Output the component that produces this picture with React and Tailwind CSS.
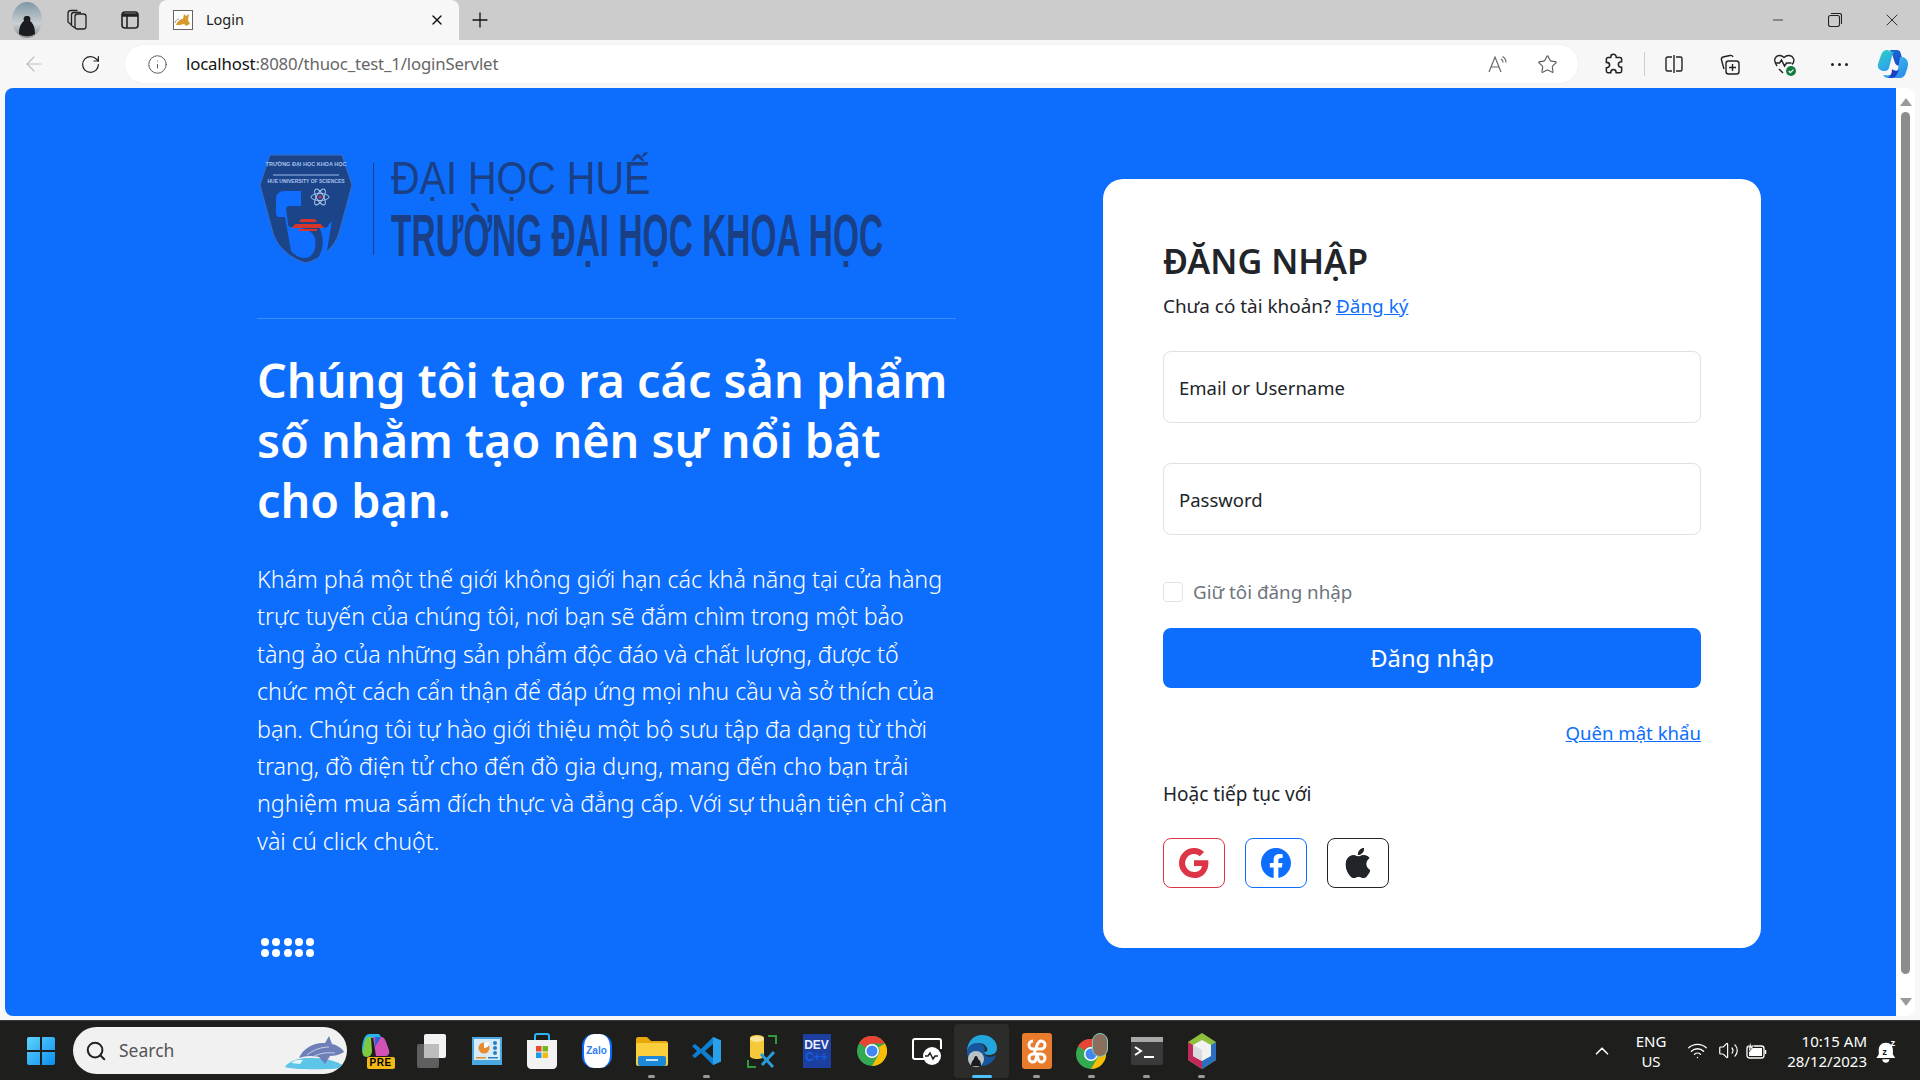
import { ArrowLeft, RotateCw, Info, Star, Plus, X, Minus, Search, ChevronUp, Wifi, Volume2 } from 'lucide-react';
import { BsGoogle, BsFacebook, BsApple } from 'react-icons/bs';

const sans = "font-['Noto_Sans','Open_Sans',sans-serif]";

const introLines = [
  'Khám phá một thế giới không giới hạn các khả năng tại cửa hàng',
  'trực tuyến của chúng tôi, nơi bạn sẽ đắm chìm trong một bảo',
  'tàng ảo của những sản phẩm độc đáo và chất lượng, được tổ',
  'chức một cách cẩn thận để đáp ứng mọi nhu cầu và sở thích của',
  'bạn. Chúng tôi tự hào giới thiệu một bộ sưu tập đa dạng từ thời',
  'trang, đồ điện tử cho đến đồ gia dụng, mang đến cho bạn trải',
  'nghiệm mua sắm đích thực và đẳng cấp. Với sự thuận tiện chỉ cần',
  'vài cú click chuột.',
];

function Avatar() {
  return (
    <svg width="30" height="36" viewBox="0 0 30 36">
      <defs>
        <linearGradient id="sky" x1="0" y1="0" x2="0" y2="1">
          <stop offset="0" stopColor="#7f98a6" />
          <stop offset="0.6" stopColor="#c9cfd2" />
          <stop offset="1" stopColor="#8b8f92" />
        </linearGradient>
      </defs>
      <ellipse cx="15" cy="18" rx="15" ry="18" fill="url(#sky)" />
      <path d="M7 32c0-7 2-11 5-13-1-3 0-5 3-5s4 2 3 5c3 2 5 6 5 13-5 3-11 3-16 0z" fill="#1c1c20" />
    </svg>
  );
}

function Collections() {
  return (
    <svg width="22" height="22" viewBox="0 0 22 22" fill="none" stroke="#222" strokeWidth="1.3">
      <rect x="9" y="5" width="11" height="15" rx="2.5" />
      <path d="M9 19 5.500 16.500V6c0-1.500 1-2.500 2.500-2.500h7" />
      <path d="M5.500 16 2 13V4c0-1.500 1-2.500 2.500-2.500h7" />
    </svg>
  );
}

function VerticalTabs() {
  return (
    <svg width="20" height="20" viewBox="0 0 20 20" fill="none" stroke="#222" strokeWidth="1.6">
      <rect x="2" y="2" width="16" height="16" rx="3" />
      <path d="M2 5h16" strokeWidth="3.500" />
      <path d="M7 5v13" />
    </svg>
  );
}

function Tomcat() {
  return (
    <svg width="20" height="20" viewBox="0 0 20 20">
      <rect x="0.5" y="0.500" width="19" height="19" fill="#fff" stroke="#666" />
      <path d="M3 15c2-5 5-6 7-6l1-5 2 2 3-2-1 6 2 4-4 2-2-2-4 1z" fill="#d69a2e" />
      <path d="M2 13c1-3 2-4 4-4" stroke="#999" fill="none" />
    </svg>
  );
}

function ReadAloud() {
  return (
    <svg width="22" height="22" viewBox="0 0 22 22" fill="none" stroke="#666" strokeWidth="1.2">
      <path d="M2 19 8 4l6 15M4.500 14h7" />
      <path d="M14 6c1.500.8 2 2 2 3.500M15.500 3.500C18 5 19 7 19 9.500" />
    </svg>
  );
}

function Extensions() {
  return (
    <svg width="24" height="24" viewBox="0 0 22 22" fill="none" stroke="#222" strokeWidth="1.400">
      <path d="M8 4.500a2.500 2.500 0 0 1 5 0V5h3.500A1.500 1.500 0 0 1 18 6.500V9h-.5a2.500 2.500 0 0 0 0 5h.5v3.500a1.500 1.500 0 0 1-1.500 1.500H13c0-2-1-3-2.500-3S8 17 8 19H5.500A1.500 1.500 0 0 1 4 17.500V14.500c2 0 3-1 3-2.500S6 9.500 4 9.500V6.500A1.500 1.500 0 0 1 5.500 5H8z" />
    </svg>
  );
}

function SplitScreen() {
  return (
    <svg width="22" height="22" viewBox="0 0 22 22" fill="none" stroke="#222" strokeWidth="1.400">
      <path d="M9 4H4.500A1.500 1.500 0 0 0 3 5.500v11A1.500 1.500 0 0 0 4.500 18H9M13 4h4.500A1.500 1.500 0 0 1 19 5.500v11a1.500 1.500 0 0 1-1.500 1.500H13" />
      <path d="M11 2v18" />
    </svg>
  );
}

function AddCollection() {
  return (
    <svg width="24" height="24" viewBox="0 0 24 24" fill="none" stroke="#222" strokeWidth="1.400">
      <path d="M6 17 3.500 8c-.4-1.500.3-2.500 1.500-3l7-1.500c1.500-.3 2.500.3 3 1.500" />
      <rect x="8" y="9" width="13" height="13" rx="2.500" />
      <path d="M14.500 12v7M11 15.500h7" />
    </svg>
  );
}

function Health() {
  return (
    <svg width="26" height="26" viewBox="0 0 26 26" fill="none">
      <path d="M5 15C3 12 2 10 3 7.500 4.500 4 9 3.500 12 6.500 15 3.500 20 4 21.500 7.500c.8 2.200 0 4.500-1.500 6" stroke="#222" strokeWidth="1.400" />
      <path d="M3 12h4.500l2-3 3 6 2-3h5" stroke="#222" strokeWidth="1.400" />
      <path d="M7 18l4 4" stroke="#222" strokeWidth="1.400" />
      <circle cx="19" cy="20" r="5" fill="#107c41" />
      <path d="m16.800 20 1.600 1.600 3-3" stroke="#fff" strokeWidth="1.300" />
    </svg>
  );
}

function Copilot() {
  return (
    <svg width="32" height="32" viewBox="0 0 32 32">
      <defs>
        <linearGradient id="cpA" x1="0" y1="0" x2="0.6" y2="1">
          <stop offset="0" stopColor="#2bd4c0" />
          <stop offset="1" stopColor="#2f9cf0" />
        </linearGradient>
        <linearGradient id="cpB" x1="0.2" y1="0" x2="1" y2="1">
          <stop offset="0" stopColor="#1a6fd6" />
          <stop offset="1" stopColor="#1d3fc0" />
        </linearGradient>
        <linearGradient id="cpC" x1="0" y1="0" x2="1" y2="1">
          <stop offset="0" stopColor="#39c6f2" />
          <stop offset="1" stopColor="#2a86e8" />
        </linearGradient>
      </defs>
      <path d="M12 2h8c2 0 3 1 3.500 2.500L27 17c-3 2-8 1-9-2l-3-9C14 3.500 13 2 12 2z" fill="url(#cpB)" />
      <path d="M10 2c-3 0-5 2-6 5L1 16c-1 4 2 7 6 7h1c2 0 3-1 4-3l3-12c.5-3 1-4 3-4h-3C13 4 12 2 10 2z" fill="url(#cpA)" />
      <path d="M23 9h2c3 0 6 3 6 7 0 3-1 5-2 8-1 4-3 6-7 6H11c-2 0-4-1-5-3 7 1 13-1 15-6z" fill="url(#cpC)" />
      <path d="M15 21c2 2 5 2 7 1l-3 6c-2 2-5 2-8 2 3-2 4-5 4-9z" fill="#1d3fc0" />
    </svg>
  );
}

function Shield() {
  return (
    <svg className="shrink-0" width="94" height="112" viewBox="0 0 94 112">
      <path d="M11 2h72l10 30-13 48c-4 14-18 26-33 30-15-4-29-16-33-30L1 32z" fill="#1b4489" stroke="#3c6ec0" strokeWidth="1" />
      <path d="M14 22h66" stroke="#9db9e6" strokeWidth="1" />
      <text x="47" y="13" textAnchor="middle" fontSize="5.500" fill="#a9c3ec" fontFamily="Liberation Sans" fontWeight="700">TRƯỜNG ĐẠI HỌC KHOA HỌC</text>
      <text x="47" y="30" textAnchor="middle" fontSize="5" fill="#a9c3ec" fontFamily="Liberation Sans" fontWeight="700">HUE UNIVERSITY OF SCIENCES</text>
      <path d="M42 38H26c-6 0-9 3-9 8v14c0 2 1 4 3 4h6l6 34c6 6 10 7 14 7 8 0 12-10 10-20-2-6-8-9-14-10l-10-1c-3 0-3-3-3-4l-2-14c0-1 1-3 3-3h12z" fill="#0f6dff" />
      <path d="M60 74c8 1 8 2 10-3l3-3-5 30c-2 4-6 7-10 8 5-6 7-14 5-24-1-4-2-6-3-8z" fill="#0f6dff" />
      <g fill="none" stroke="#a9c3ec" strokeWidth="1">
        <ellipse cx="61" cy="44" rx="9" ry="3.500" />
        <ellipse cx="61" cy="44" rx="9" ry="3.500" transform="rotate(60 61 44)" />
        <ellipse cx="61" cy="44" rx="9" ry="3.500" transform="rotate(120 61 44)" />
      </g>
      <circle cx="61" cy="44" r="1.500" fill="#d33" />
      <path d="M42 66h14l2 3H40zM36 71h26l3 4H33zM40 76h18v2H40z" fill="#d8352a" />
    </svg>
  );
}

function Windows() {
  return (
    <svg width="30" height="30" viewBox="0 0 30 30">
      <defs>
        <linearGradient id="win" x1="0" y1="0" x2="1" y2="1">
          <stop offset="0" stopColor="#5fd4fb" />
          <stop offset="1" stopColor="#0a8ef0" />
        </linearGradient>
      </defs>
      <path d="M1 3a2 2 0 0 1 2-2h11v13H1zM16 1h11a2 2 0 0 1 2 2v11H16zM1 16h13v13H3a2 2 0 0 1-2-2zM16 16h13v11a2 2 0 0 1-2 2H16z" fill="url(#win)" />
    </svg>
  );
}

function Whale() {
  return (
    <svg width="64" height="40" viewBox="0 0 64 40">
      <path d="M2 36c5-7 14-9 24-9 12 0 26 1 36 9-4 3-55 3-60 0z" fill="#5cc5e8" />
      <path d="M8 32c3-3 8-4 12-3l-3 4z" fill="#e8f6fb" />
      <path d="M16 27c4-10 16-16 26-15l4-7 3 8c5 1 10 4 12 8-5 3-10 4-14 4l-5 8-6-7c-8-2-14-1-20 1z" fill="#6e7fb8" />
      <path d="M24 24c6-5 14-8 22-8M28 27c6-4 14-6 24-5" stroke="#c6cfe8" strokeWidth="1" fill="none" />
    </svg>
  );
}

function SearchBox() {
  return (
    <div className="flex items-center w-[274px] h-[47px] rounded-full bg-[#f1f1f1] pl-[12px] overflow-hidden">
      <Search size={22} strokeWidth={2.2} color="#222" />
      <span className={`ml-[12px] flex-1 text-[17.500px] text-[#555] ${sans}`}>Search</span>
      <Whale />
    </div>
  );
}

function CopilotPre() {
  return (
    <div className="relative w-[32px] h-[36px]">
      <svg width="30" height="28" viewBox="0 0 30 28">
        <path d="M8 1h10l3 4H10C6 5 5 10 4 18c-1 4-3 3-3-1 0-6 2-16 7-16z" fill="#27b6e8" />
        <path d="M4 8c1-4 3-4 6-4l1 14c0 3-2 6-5 6-4 0-5-3-4-7z" fill="#7ecb3f" />
        <path d="M12 4h8c3 0 4 2 5 5l3 8c1 4-1 6-4 6h-9z" fill="#d352b8" />
        <path d="M14 4h6l-6 10z" fill="#2a64d8" />
      </svg>
      <span className="absolute left-[6px] bottom-0 px-[3px] rounded-[2px] bg-[#f5b916] text-[10px] leading-[12px] font-bold text-black font-['Liberation_Sans',sans-serif] tracking-[0.5px]">PRE</span>
    </div>
  );
}

function TaskView() {
  return (
    <svg width="30" height="34" viewBox="0 0 30 34">
      <rect x="0" y="10" width="22" height="24" rx="2" fill="#5f5f5f" />
      <rect x="7" y="0" width="22" height="24" rx="2" fill="#f2f2f2" />
      <rect x="7" y="10" width="15" height="14" fill="#bdbdbd" />
    </svg>
  );
}

function Widgets() {
  return (
    <svg width="30" height="28" viewBox="0 0 30 28">
      <rect width="30" height="28" fill="#4aa7e0" />
      <rect x="2" y="2" width="26" height="21" fill="#d8ecf8" />
      <circle cx="12" cy="11" r="5.500" fill="#e88c30" />
      <path d="M12 11V5.500h5.500A5.500 5.500 0 0 1 12 11z" fill="#fff" />
      <circle cx="23" cy="6" r="2" fill="#2a7fc0" />
      <circle cx="23" cy="11" r="2" fill="#2a7fc0" />
      <circle cx="23" cy="16" r="2" fill="#2a7fc0" />
      <rect x="4" y="20" width="10" height="1.500" fill="#e88c30" />
      <rect x="16" y="20" width="10" height="1.500" fill="#2a7fc0" />
    </svg>
  );
}

function Store() {
  return (
    <svg width="30" height="36" viewBox="0 0 30 36">
      <path d="M8 8V3c0-1 1-2 2-2h10c1 0 2 1 2 2v5" stroke="#29b6f6" strokeWidth="2" fill="none" />
      <path d="M0 7h30v25c0 2-2 4-4 4H4c-2 0-4-2-4-4z" fill="#f2f2f2" />
      <rect x="9" y="13" width="5.500" height="5.500" fill="#e8492b" />
      <rect x="15.500" y="13" width="5.500" height="5.500" fill="#7ab51d" />
      <rect x="9" y="19.500" width="5.500" height="5.500" fill="#1d9be8" />
      <rect x="15.500" y="19.500" width="5.500" height="5.500" fill="#f5b916" />
    </svg>
  );
}

function Zalo() {
  return (
    <div className="flex items-center justify-center w-[30px] h-[34px] rounded-[12px] bg-white border-x-2 border-[#0a68ff] text-[#2f80f5] text-[10px] font-bold font-['Liberation_Sans',sans-serif]">Zalo</div>
  );
}

function Folder() {
  return (
    <svg width="32" height="30" viewBox="0 0 32 30">
      <path d="M0 3c0-1 1-2 2-2h9l4 4h15c1 0 2 1 2 2v4H0z" fill="#e8a80c" />
      <path d="M0 7h32v21c0 1-1 2-2 2H2c-1 0-2-1-2-2z" fill="#fbcf3c" />
      <rect x="2" y="20" width="28" height="10" rx="2" fill="#1d87d8" />
      <rect x="10" y="23" width="12" height="2" fill="#bfe3fb" />
    </svg>
  );
}

function VsCode() {
  return (
    <svg width="30" height="30" viewBox="0 0 30 30">
      <path d="M21 1 29 4.500v21L21 29 9 17l-6 5-3-2 5-5-5-5 3-2 6 5z" fill="#0e7fd0" />
      <path d="M21 1 29 4.500v21L21 29z" fill="#2ba0ea" />
      <path d="M21 8 13 15l8 7z" fill="#1e1f1c" />
    </svg>
  );
}

function DbTools() {
  return (
    <svg width="30" height="34" viewBox="0 0 30 34">
      <path d="M3 4c0-4 14-4 14 0v18c0 4-14 4-14 0z" fill="#f5c93a" />
      <ellipse cx="10" cy="5" rx="7" ry="3" fill="#f9e49a" />
      <path d="M21 2h8v8M1 26v7h8" stroke="#2e9a3c" strokeWidth="2" fill="none" />
      <path d="M14 20l12 13M27 18 15 31" stroke="#2a9ad8" strokeWidth="3" />
    </svg>
  );
}

function DevCpp() {
  return (
    <div className="flex flex-col items-center justify-center w-[28px] h-[34px] bg-[#1d3fa0] font-['Liberation_Sans',sans-serif] font-bold leading-none">
      <span className="text-[12px] text-[#e8eefc]">DEV</span>
      <span className="text-[12px] text-[#0f5fe0]">C++</span>
    </div>
  );
}

function Chrome() {
  return (
    <svg width="30" height="30" viewBox="0 0 30 30">
      <circle cx="15" cy="15" r="15" fill="#34a853" />
      <path d="M15 0a15 15 0 0 1 13 7.500H15a7.500 7.500 0 0 0-6.500 3.750L2 7A15 15 0 0 1 15 0z" fill="#ea4335" />
      <path d="M28 7.500A15 15 0 0 1 15 30l6.500-11.250A7.500 7.500 0 0 0 21.500 11.250z" fill="#fbbc04" />
      <circle cx="15" cy="15" r="7" fill="#fff" />
      <circle cx="15" cy="15" r="5.500" fill="#4285f4" />
    </svg>
  );
}

function Perfmon() {
  return (
    <svg width="30" height="30" viewBox="0 0 30 30" fill="none">
      <path d="M12 23H3a2 2 0 0 1-2-2V5a2 2 0 0 1 2-2h24a2 2 0 0 1 2 2v8" stroke="#fff" strokeWidth="2" />
      <circle cx="20" cy="20" r="9" fill="#fff" />
      <path d="M13 20h3l2-3 3 6 2-3h3" stroke="#222" strokeWidth="1.500" />
    </svg>
  );
}

function Edge() {
  return (
    <svg width="30" height="34" viewBox="0 0 30 34">
      <path d="M15 1c9 0 15 6 15 13 0 5-4 7-8 7-3 0-5-1-5-3 3 0 4-2 3-4-2-5-8-6-13-3C2 13 0 16 0 18 0 8 6 1 15 1z" fill="#22a5dc" />
      <path d="M0 17c1-5 5-8 10-8s8 3 8 7c-2 2-1 6 4 7 3 0 5-1 7-2-2 7-8 11-14 11C6 32 0 26 0 17z" fill="#17569e" />
      <circle cx="9" cy="25" r="8" fill="#b9c2c6" />
      <path d="M4 32c0-4 2-6 3-7 0-2 1-3 2-3s2 1 2 3c2 1 3 3 3 7z" fill="#1b1b1f" />
    </svg>
  );
}

function Xampp() {
  return (
    <div className="flex items-center justify-center w-[30px] h-[36px] rounded-[3px] bg-[#e97b2c]">
      <svg width="22" height="26" viewBox="0 0 22 26" fill="none" stroke="#fff" strokeWidth="3">
        <path d="M7 3a4 4 0 0 0 0 8h8a4 4 0 0 0 0-8c-2 0-3 2-4 4-1 4-2 8-4 9a4 4 0 0 0 0 8c3 0 3-3 4-8 1 4 1 8 4 8a4 4 0 0 0 0-8H7" />
      </svg>
    </div>
  );
}

function ChromeProfile() {
  return (
    <div className="relative w-[32px] h-[36px] pt-[6px]">
      <Chrome />
      <span className="absolute right-0 top-0 w-[16px] h-[24px] rounded-full bg-[#8a6f5d] border border-[#7fc8c0]" />
    </div>
  );
}

function Terminal() {
  return (
    <svg width="32" height="28" viewBox="0 0 32 28">
      <rect width="32" height="28" rx="2" fill="#3a3a3a" />
      <rect width="32" height="5" fill="#a8a8a8" />
      <path d="M4 10l6 4-6 4" stroke="#fff" strokeWidth="2" fill="none" />
      <path d="M13 20h10" stroke="#fff" strokeWidth="2" />
    </svg>
  );
}

function Box3d() {
  return (
    <svg width="28" height="36" viewBox="0 0 28 36">
      <path d="M14 0 28 9v18l-14 9L0 27V9z" fill="#8fbf3c" />
      <path d="M0 9l14 9v18L0 27z" fill="#c0285a" />
      <path d="M28 9 14 18v18l14-9z" fill="#2a6fc0" />
      <path d="M14 7l9 5v11l-9 5-9-5V12z" fill="#f2f2f2" />
      <path d="M14 17v11l-9-5V12z" fill="#d8dadc" />
    </svg>
  );
}

function BatteryCharge() {
  return (
    <svg width="22" height="18" viewBox="0 0 22 18" fill="none">
      <rect x="1" y="4" width="17" height="12" rx="2.500" stroke="#fff" strokeWidth="1.300" />
      <rect x="3" y="6" width="13" height="8" fill="#fff" />
      <path d="M19.500 8v4" stroke="#fff" strokeWidth="1.500" />
      <path d="M5 0 2 6h3L3 10l5-6H5z" fill="#fff" stroke="#1e1f1c" strokeWidth="0.500" />
    </svg>
  );
}

function BellZz() {
  return (
    <svg width="24" height="26" viewBox="0 0 20 22" fill="#fff">
      <path d="M9 4C5 4 3 7 3 10v4l-2 3h16l-2-3v-4c0-3-2-6-6-6zM6 18h6c0 2-1.500 3-3 3s-3-1-3-3z" />
      <text x="6" y="14" fontSize="8" fontWeight="700" fill="#1e1f1c" fontFamily="Liberation Sans">z</text>
      <text x="13" y="7" fontSize="8" fontWeight="700" fontFamily="Liberation Sans">z</text>
    </svg>
  );
}

function Slot({ w, children }) {
  return <div className={`flex items-center justify-center shrink-0 h-full ${w}`}>{children}</div>;
}

function Dock({ running, active, children }) {
  return (
    <div className={`relative flex items-center justify-center w-[55px] h-[54px] rounded-[4px] ${active ? 'bg-[#2c2d2a]' : ''}`}>
      {children}
      {running && <span className={`absolute bottom-0 h-[3px] rounded-full ${active ? 'w-[20px] bg-[#4cc2ff]' : 'w-[7px] bg-[#9a9a9a]'}`} />}
    </div>
  );
}

function Dots() {
  return (
    <div className="grid grid-cols-5 gap-x-[3.250px] gap-y-[3px] w-[53px]">
      {Array.from({ length: 10 }).map((_, i) => (
        <span key={i} className="w-[8px] h-[8px] rounded-full bg-white" />
      ))}
    </div>
  );
}

function Field({ placeholder, className }) {
  return (
    <div className={`flex items-center h-[72px] pl-[15px] pt-[1px] border border-[#dee2e6] rounded-[8px] text-[18.500px] text-[#212529] ${className}`}>
      {placeholder}
    </div>
  );
}

export default function App() {
  return (
    <div className={`flex flex-col h-screen overflow-hidden bg-[#f7f7f7] ${sans}`}>
      {/* tabs */}
      <div className="flex h-[40px] shrink-0 bg-[#cccccc]">
        <Slot w="w-[54px]"><Avatar /></Slot>
        <Slot w="w-[46px]"><Collections /></Slot>
        <Slot w="w-[59px]"><VerticalTabs /></Slot>
        <div className="flex items-center w-[300px] pl-[14px] pr-[14px] rounded-t-[8px] bg-[#f7f7f7]">
          <Tomcat />
          <span className="ml-[13px] flex-1 text-[14.500px] text-[#222]">Login</span>
          <X size={16} color="#111" />
        </div>
        <Slot w="w-[42px]"><Plus size={24} strokeWidth={1.300} color="#111" /></Slot>
        <div className="flex-1" />
        <Slot w="w-[57px]"><Minus size={16} strokeWidth={1.200} color="#222" /></Slot>
        <Slot w="w-[57px]">
          <svg width="14" height="14" viewBox="0 0 14 14" fill="none" stroke="#222" strokeWidth="1.100">
            <rect x="0.500" y="2.500" width="11" height="11" rx="2" />
            <path d="M3 .5h8.500a2 2 0 0 1 2 2V11" />
          </svg>
        </Slot>
        <Slot w="w-[57px]"><X size={20} strokeWidth={1.100} color="#222" /></Slot>
      </div>

      {/* toolbar */}
      <div className="flex items-center h-[48px] shrink-0">
        <Slot w="w-[62px] pl-[6px]"><ArrowLeft size={24} strokeWidth={1.100} color="#bdbdbd" /></Slot>
        <Slot w="w-[56px]"><RotateCw size={21} strokeWidth={1.400} color="#222" /></Slot>
        <div className="flex items-center ml-[7px] w-[1459px] h-[38px] rounded-full bg-white shadow-[0_0_3px_rgba(0,0,0,0.06)]">
          <Slot w="w-[61px] pl-[4px]"><Info size={21} strokeWidth={1.100} color="#555" /></Slot>
          <span className="flex-1 text-[16.750px] tracking-[-0.15px] text-[#111]">localhost<span className="text-[#666]">:8080/thuoc_test_1/loginServlet</span></span>
          <Slot w="w-[50px] pl-[3px]"><ReadAloud /></Slot>
          <Slot w="w-[52px] mr-[5px]"><Star size={21} strokeWidth={1.200} color="#555" /></Slot>
        </div>
        <Slot w="w-[60px] ml-[6px]"><Extensions /></Slot>
        <div className="w-px h-[24px] bg-[#d0d0d0]" />
        <Slot w="w-[57px]"><SplitScreen /></Slot>
        <Slot w="w-[56px]"><AddCollection /></Slot>
        <Slot w="w-[54px]"><Health /></Slot>
        <Slot w="w-[54px]">
          <span className="flex gap-[4px]">
            <span className="w-[3px] h-[3px] rounded-full bg-[#222]" />
            <span className="w-[3px] h-[3px] rounded-full bg-[#222]" />
            <span className="w-[3px] h-[3px] rounded-full bg-[#222]" />
          </span>
        </Slot>
        <Slot w="w-[54px]"><Copilot /></Slot>
      </div>

      {/* page */}
      <div className="flex h-[928px] shrink-0 pl-[5px]">
        <div className="flex w-[1891px] h-full rounded-tl-[8px] rounded-bl-[8px] bg-[#0d6efd] overflow-hidden">
          <div className="w-[699px] ml-[252px] pt-[62px] shrink-0">
            <div className="flex items-center h-[118px] pl-[2px] text-[#1a3f85] font-['Liberation_Sans_Narrow','Liberation_Sans',sans-serif]">
              <Shield />
              <div className="w-px h-[92px] ml-[20px] bg-[#1a3f85] shrink-0" />
              <div className="ml-[17px] pt-[2px] flex flex-col w-[495px] shrink-0">
                <span className="text-[46px] leading-[52px] origin-left scale-x-[0.86] whitespace-nowrap">ĐẠI HỌC HUẾ</span>
                <span className="text-[60px] leading-[64px] font-bold origin-left scale-x-[0.558] whitespace-nowrap">TRƯỜNG ĐẠI HỌC KHOA HỌC</span>
              </div>
            </div>
            <div className="h-px mt-[50px] bg-[#3d8bfd]" />
            <h1 className="mt-[31px] text-[46.750px] leading-[60px] font-semibold text-white">
              Chúng tôi tạo ra các sản phẩm<br />số nhằm tạo nên sự nổi bật<br />cho bạn.
            </h1>
            <p className="mt-[31px] text-[23.250px] leading-[37.400px] font-light text-white">
              {introLines.map(line => (
                <span key={line} className="block whitespace-nowrap">{line}</span>
              ))}
            </p>
            <div className="mt-[78px] pl-[4px]"><Dots /></div>
          </div>

          <div className="w-[658px] h-[769px] ml-[147px] mt-[91px] shrink-0 rounded-[20px] bg-white px-[60px] pt-[58px] text-[#212529]">
            <h2 className="text-[34.200px] leading-[48px] font-semibold">ĐĂNG NHẬP</h2>
            <p className="mt-[6px] text-[18.900px] leading-[30px]">
              Chưa có tài khoản? <a className="text-[#0d6efd] underline">Đăng ký</a>
            </p>
            <Field placeholder="Email or Username" className="mt-[30px]" />
            <Field placeholder="Password" className="mt-[40px]" />
            <label className="flex items-center gap-[10px] mt-[42px] text-[18.800px] leading-[30px] text-[#6c757d]">
              <span className="w-[20px] h-[20px] rounded-[4px] border border-[#dee2e6] bg-white" />
              Giữ tôi đăng nhập
            </label>
            <button className="block w-full h-[60px] mt-[21px] pt-[2px] rounded-[8px] bg-[#0d6efd] text-[23.800px] text-white">Đăng nhập</button>
            <div className="mt-[30px] text-right text-[18.600px] leading-[30px]">
              <a className="text-[#0d6efd] underline">Quên mật khẩu</a>
            </div>
            <p className="mt-[31px] text-[19px] leading-[30px]">Hoặc tiếp tục với</p>
            <div className="flex gap-[20px] mt-[29px]">
              <a className="flex items-center justify-center w-[62px] h-[50px] border border-[#dc3545] rounded-[8px] text-[#dc3545] text-[30px]"><BsGoogle /></a>
              <a className="flex items-center justify-center w-[62px] h-[50px] border border-[#0d6efd] rounded-[8px] text-[#0d6efd] text-[30px]"><BsFacebook /></a>
              <a className="flex items-center justify-center w-[62px] h-[50px] border border-[#212529] rounded-[8px] text-[#212529] text-[30px]"><BsApple /></a>
            </div>
          </div>
        </div>

        {/* scrollbar */}
        <div className="flex flex-col justify-between items-center w-[19px] h-full rounded-tr-[8px] rounded-br-[8px] bg-white py-[10px]">
          <span className="w-0 h-0 border-x-[6px] border-x-transparent border-b-[8px] border-b-[#9a9a9a]" />
          <span className="w-[9px] flex-1 my-[6px] mb-[24px] rounded-full bg-[#8c8c8c]" />
          <span className="w-0 h-0 border-x-[6px] border-x-transparent border-t-[8px] border-t-[#9a9a9a]" />
        </div>
      </div>

      <div className="h-[4px] shrink-0" />

      {/* taskbar */}
      <div className="flex items-center h-[60px] shrink-0 bg-[#1e1f1c] border-t border-[#3a3a3a] text-white">
        <Slot w="w-[73px] pl-[8px]"><Windows /></Slot>
        <SearchBox />
        <div className="flex items-center ml-[2px]">
          <Dock><CopilotPre /></Dock>
          <Dock><TaskView /></Dock>
          <Dock><Widgets /></Dock>
          <Dock><Store /></Dock>
          <Dock><Zalo /></Dock>
          <Dock running><Folder /></Dock>
          <Dock running><VsCode /></Dock>
          <Dock><DbTools /></Dock>
          <Dock><DevCpp /></Dock>
          <Dock><Chrome /></Dock>
          <Dock><Perfmon /></Dock>
          <Dock running active><Edge /></Dock>
          <Dock running><Xampp /></Dock>
          <Dock running><ChromeProfile /></Dock>
          <Dock running><Terminal /></Dock>
          <Dock running><Box3d /></Dock>
        </div>
        <div className="flex-1" />
        <Slot w="w-[40px]"><ChevronUp size={22} strokeWidth={1.800} color="#fff" /></Slot>
        <div className="flex flex-col items-center w-[58px] text-[15px] leading-[20px]">
          <span>ENG</span>
          <span>US</span>
        </div>
        <Slot w="w-[31px] ml-[2px]"><Wifi size={21} strokeWidth={1.500} color="#fff" /></Slot>
        <Slot w="w-[30px]"><Volume2 size={21} strokeWidth={1.400} color="#fff" /></Slot>
        <Slot w="w-[28px]"><BatteryCharge /></Slot>
        <div className="flex flex-col items-end w-[96px] text-[15px] leading-[20px]">
          <span>10:15 AM</span>
          <span>28/12/2023</span>
        </div>
        <Slot w="w-[40px] mr-[13px]"><BellZz /></Slot>
      </div>
    </div>
  );
}
